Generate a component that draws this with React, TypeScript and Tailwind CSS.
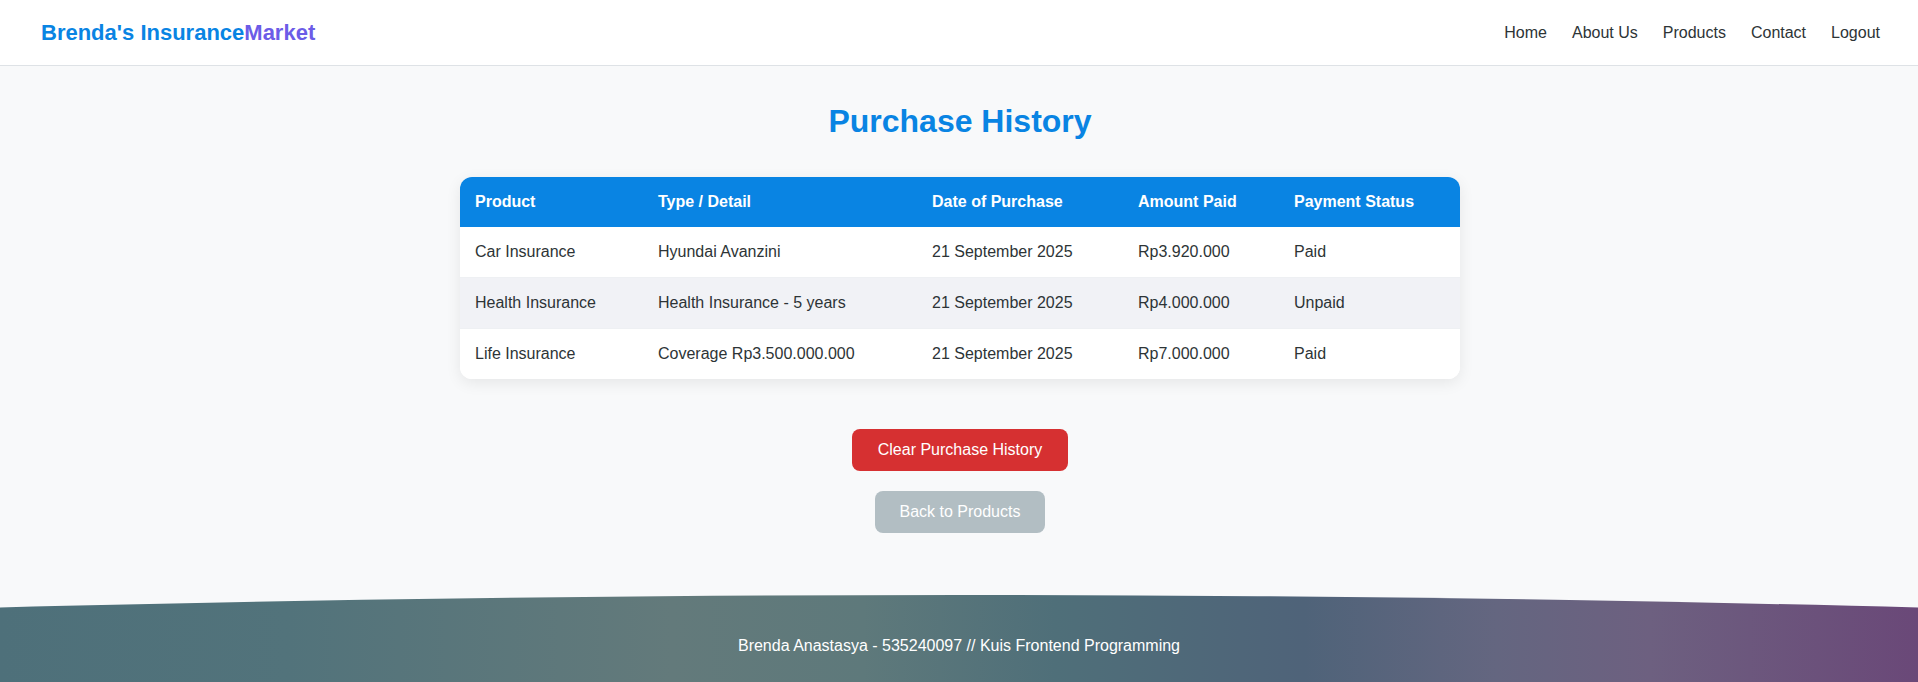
import React from "react";

const rows = [
  ["Car Insurance", "Hyundai Avanzini", "21 September 2025", "Rp3.920.000", "Paid"],
  ["Health Insurance", "Health Insurance - 5 years", "21 September 2025", "Rp4.000.000", "Unpaid"],
  ["Life Insurance", "Coverage Rp3.500.000.000", "21 September 2025", "Rp7.000.000", "Paid"],
];

export default function App() {
  return (
    <div className="min-h-[682px] bg-[#f8f9fa] font-['Liberation_Sans',Arial,sans-serif] text-[#2d3436] flex flex-col">
      <header className="h-[66px] bg-white border-b border-[#dee2e6] flex items-center justify-between pl-[41px] pr-[38px]">
        <div className="text-[22px] leading-[26px] font-bold">
          <span className="text-[#0984e3]">Brenda's Insurance</span>
          <span className="text-[#6c5ce7]">Market</span>
        </div>
        <nav className="flex items-center gap-[25px] text-[16px] leading-[20px] text-[#2d3436]">
          <a>Home</a>
          <a>About Us</a>
          <a>Products</a>
          <a>Contact</a>
          <a>Logout</a>
        </nav>
      </header>

      <main className="flex flex-col items-center pl-[2px]">
        <h1 className="mt-[37px] text-[32px] leading-[36px] font-bold text-[#0984e3]">Purchase History</h1>

        <div className="mt-[38px] w-[1000px] rounded-[12px] overflow-hidden bg-white shadow-[0_4px_15px_rgba(0,0,0,0.08)]">
          <table className="w-full table-fixed border-collapse text-[16px] leading-[20px] text-left">
            <thead>
              <tr className="bg-[#0984e3] text-white">
                <th className="w-[183px] px-[15px] py-[15px] font-bold">Product</th>
                <th className="w-[274px] px-[15px] py-[15px] font-bold">Type / Detail</th>
                <th className="w-[206px] px-[15px] py-[15px] font-bold">Date of Purchase</th>
                <th className="w-[156px] px-[15px] py-[15px] font-bold">Amount Paid</th>
                <th className="px-[15px] py-[15px] font-bold">Payment Status</th>
              </tr>
            </thead>
            <tbody>
              {rows.map((r, i) => (
                <tr
                  key={i}
                  className={
                    (i === 1 ? "bg-[#f1f2f6] " : "bg-white ") +
                    (i < rows.length - 1 ? "border-b border-[#eef0f3]" : "")
                  }
                >
                  {r.map((c, j) => (
                    <td key={j} className="px-[15px] py-[15px]">
                      {c}
                    </td>
                  ))}
                </tr>
              ))}
            </tbody>
          </table>
        </div>

        <button className="mt-[50px] h-[42px] px-[26px] rounded-[8px] bg-[#d63031] text-white text-[16px] leading-[18px]">
          Clear Purchase History
        </button>
        <button className="mt-[20px] h-[42px] px-[25px] rounded-[8px] bg-[#b2bec3] text-white text-[16px] leading-[18px]">
          Back to Products
        </button>
      </main>

      <footer className="mt-[62px] h-[87px] pt-[41px] text-center text-white text-[16px] leading-[20px] bg-[linear-gradient(90deg,#4e707a_0%,#52737b_15%,#637a7b_35%,#5e797b_45%,#4f6f79_55%,#4f6379_68%,#646680_78%,#6d6080_86%,#6a4878_100%)] [clip-path:ellipse(6085px_1000px_at_50%_1000px)]">
        Brenda Anastasya - 535240097 // Kuis Frontend Programming
      </footer>
    </div>
  );
}
